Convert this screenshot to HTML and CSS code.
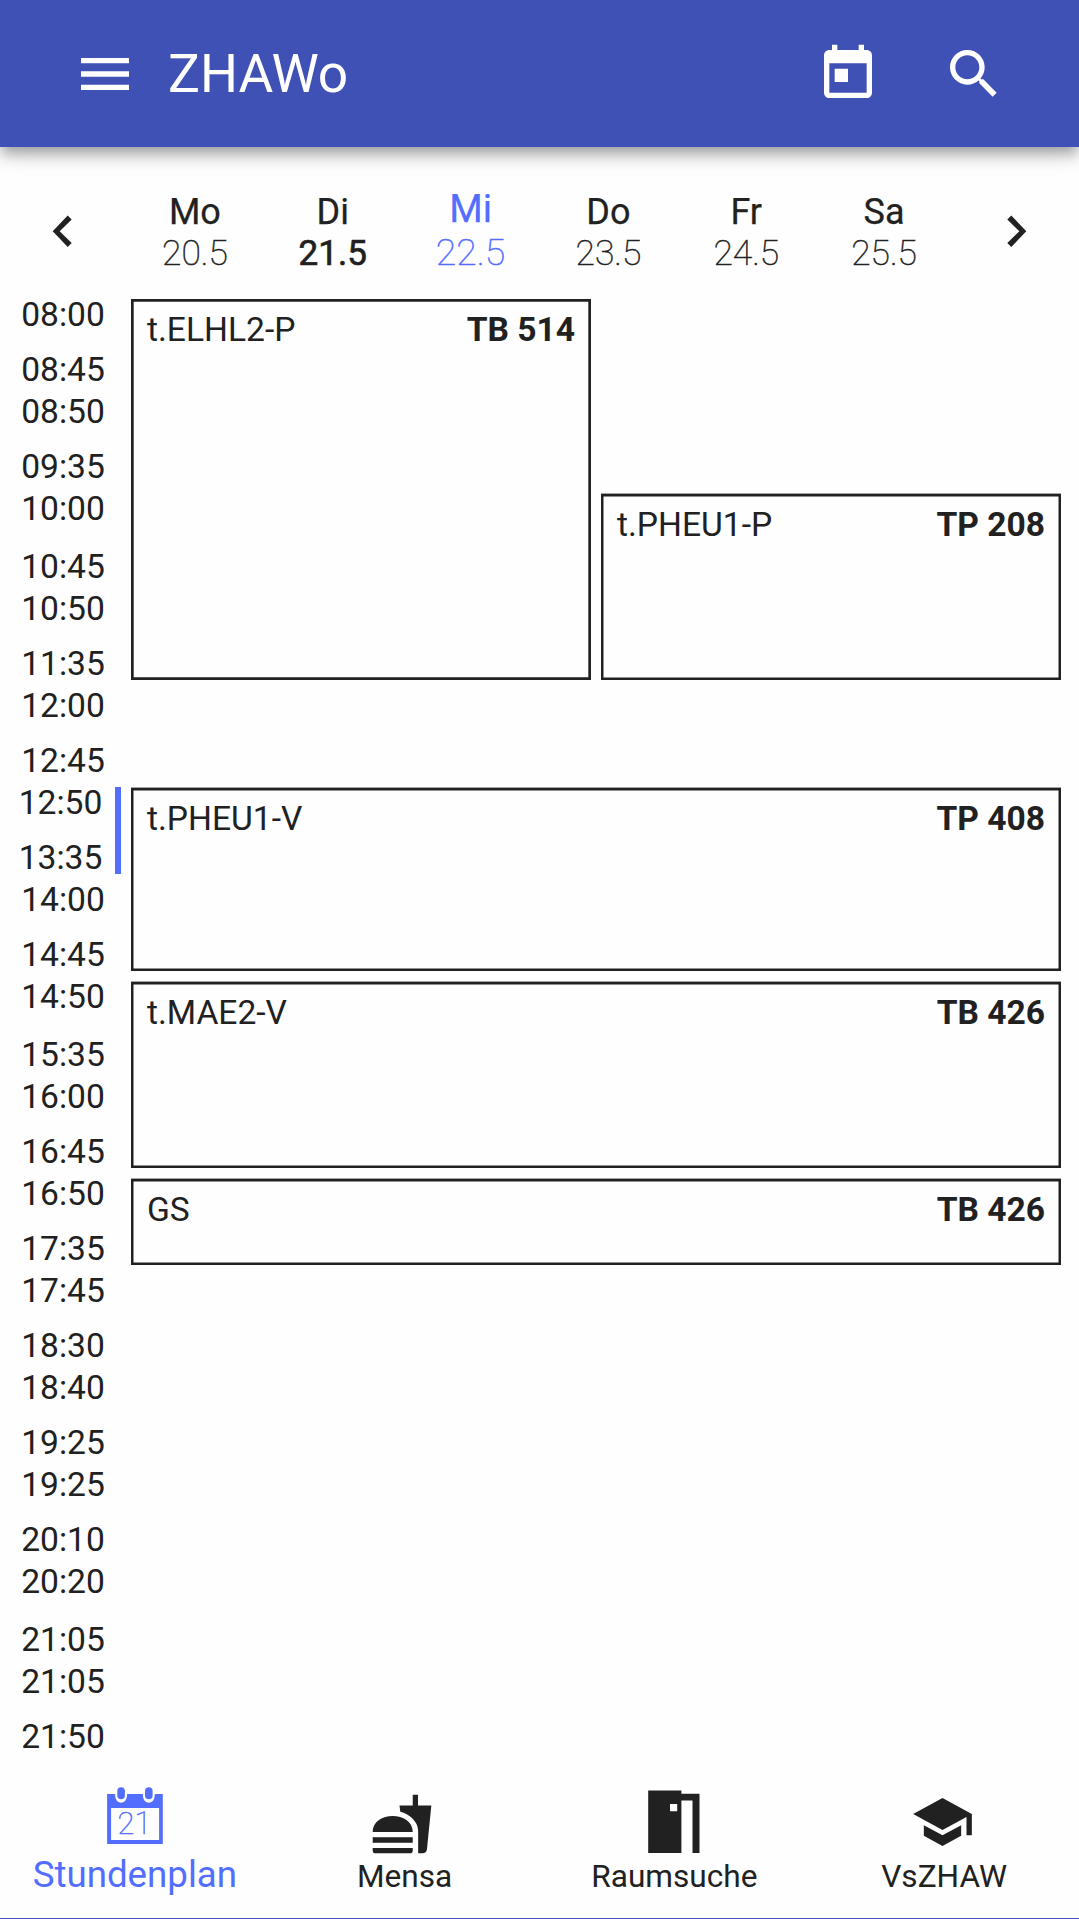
FILE: index.html
```html
<!DOCTYPE html>
<html lang="de">
<head>
<meta charset="utf-8">
<title>ZHAWo</title>
<link rel="stylesheet" href="styles.css">
</head>
<body>
<header class="topbar">
  <svg class="icon" viewBox="0 0 24 24"><path d="M3 18h18v-2H3v2zm0-5h18v-2H3v2zm0-7v2h18V6H3z"/></svg>
  <h1 class="title">ZHAWo</h1>
  <svg class="icon today" viewBox="0 0 24 24"><path d="M19 3h-1V1h-2v2H8V1H6v2H5c-1.11 0-1.99.9-1.99 2L3 19c0 1.1.89 2 2 2h14c1.1 0 2-.9 2-2V5c0-1.1-.9-2-2-2zm0 16H5V8h14v11zM7 10h5v5H7z"/></svg>
  <svg class="icon" viewBox="0 0 24 24"><path d="M15.5 14h-.79l-.28-.27C15.41 12.59 16 11.11 16 9.5 16 5.91 13.09 3 9.5 3S3 5.91 3 9.5 5.91 16 9.5 16c1.61 0 3.09-.59 4.23-1.57l.27.28v.79l5 4.99L20.49 19l-4.99-5zm-6 0C7.01 14 5 11.99 5 9.5S7.01 5 9.5 5 14 7.01 14 9.5 11.99 14 9.5 14z"/></svg>
</header>

<section class="week">
  <svg class="chevron" viewBox="0 0 126 152"><path d="M71.7 219.5l-12 11.8 12 11.8-4 3.9-15-15.7 15-15.7z" transform="translate(0 -147)"/></svg>
  <div class="day"><span class="name">Mo</span><span class="date">20.5</span></div>
  <div class="day today-date"><span class="name">Di</span><span class="date">21.5</span></div>
  <div class="day selected"><span class="name">Mi</span><span class="date">22.5</span></div>
  <div class="day"><span class="name">Do</span><span class="date">23.5</span></div>
  <div class="day"><span class="name">Fr</span><span class="date">24.5</span></div>
  <div class="day"><span class="name">Sa</span><span class="date">25.5</span></div>
  <svg class="chevron" viewBox="0 0 126 152"><path d="M54.3 72.5l12 11.8-12 11.8 4 3.9 15-15.7-15-15.7z"/></svg>
</section>

<main class="schedule">
  <div class="times">
    <div class="slot"><span>08:00</span><span>08:45</span></div>
    <div class="slot"><span>08:50</span><span>09:35</span></div>
    <div class="slot"><span>10:00</span><span>10:45</span></div>
    <div class="slot"><span>10:50</span><span>11:35</span></div>
    <div class="slot"><span>12:00</span><span>12:45</span></div>
    <div class="slot now"><span>12:50</span><span>13:35</span></div>
    <div class="slot"><span>14:00</span><span>14:45</span></div>
    <div class="slot"><span>14:50</span><span>15:35</span></div>
    <div class="slot"><span>16:00</span><span>16:45</span></div>
    <div class="slot"><span>16:50</span><span>17:35</span></div>
    <div class="slot"><span>17:45</span><span>18:30</span></div>
    <div class="slot"><span>18:40</span><span>19:25</span></div>
    <div class="slot"><span>19:25</span><span>20:10</span></div>
    <div class="slot"><span>20:20</span><span>21:05</span></div>
    <div class="slot"><span>21:05</span><span>21:50</span></div>
  </div>
  <div class="events">
    <article class="event elhl"><span>t.ELHL2-P</span><b>TB 514</b></article>
    <article class="event pheu-p"><span>t.PHEU1-P</span><b>TP 208</b></article>
    <article class="event pheu-v"><span>t.PHEU1-V</span><b>TP 408</b></article>
    <article class="event mae"><span>t.MAE2-V</span><b>TB 426</b></article>
    <article class="event gs"><span>GS</span><b>TB 426</b></article>
  </div>
</main>

<nav class="tabs">
  <a class="tab active">
    <svg class="tab-icon" viewBox="0 0 64 64"><path fill-rule="evenodd" d="M4.1 9h8c0 5.500 2.500 8.700 6 8.700s6-3.200 6-8.700h15.700c0 5.500 2.500 8.700 6 8.700s6-3.200 6-8.700h8v50H4.100zM8.100 23v32h48V23z"/><rect x="14.300" y="2.300" width="7.600" height="12" rx="3.800"/><rect x="42" y="2.300" width="7.600" height="12" rx="3.800"/><text class="cal-day" x="31.500" y="48.800" text-anchor="middle">21</text></svg>
    <span>Stundenplan</span>
  </a>
  <a class="tab">
    <svg class="tab-icon mensa" viewBox="0 0 24 24"><path d="M18.06 22.99h1.66c.84 0 1.53-.64 1.63-1.46L23 5.05h-5V1h-1.97v4.05h-4.97l.3 2.34c1.71.47 3.31 1.32 4.27 2.26 1.44 1.42 2.43 2.89 2.43 5.29v8.05zM1 21.99V21h15.03v.99c0 .55-.45 1-1.01 1H2.01c-.56 0-1.01-.45-1.01-1zm15.03-7c0-8-15.03-8-15.03 0h15.03zM1.02 17h15v2h-15v-2z"/></svg>
    <span>Mensa</span>
  </a>
  <a class="tab">
    <svg class="tab-icon" viewBox="0 0 64 64"><path fill-rule="evenodd" d="M6.2 4.400h33.200v3.400h18.100v59.100h-7V14.600H39.400v52.300H6.200zM28 18v7.200h7.200V18z"/></svg>
    <span>Raumsuche</span>
  </a>
  <a class="tab">
    <svg class="tab-icon hat" viewBox="0 0 24 24"><path d="M5 13.18v4L12 21l7-3.82v-4L12 17l-7-3.82zM12 3L1 9l11 6 9-4.910V17h2V9L12 3z"/></svg>
    <span>VsZHAW</span>
  </a>
</nav>
</body>
</html>
```
FILE: styles.css
```css
* { box-sizing: border-box; }

body {
  margin: 0;
  height: 1919px;
  display: flex;
  flex-direction: column;
  overflow: hidden;
  background: #fefefe;
  border-bottom: 1px solid #3f51b5;
  color: #212121;
  font-family: Roboto, sans-serif;
  font-size: 33.6px;
}

svg { display: block; fill: currentColor; }

.topbar {
  flex: none;
  height: 147px;
  padding: 0 73px;
  display: flex;
  align-items: center;
  background: #3f51b5;
  color: #fff;
  box-shadow: 0 6px 11px -3px rgba(0, 0, 0, .24), 0 11px 13px 0 rgba(0, 0, 0, .14), 0 3px 27px 0 rgba(0, 0, 0, .12);
}
.icon { width: 64px; height: 64px; }
.title { margin: 0 auto 0 31px; font-size: 53.3px; font-weight: 400; }
.today { margin-right: 62px; }

.week {
  flex: none;
  height: 152px;
  display: grid;
  grid-template-columns: 126px repeat(6, 1fr) 126px;
}
.chevron { width: 126px; height: 152px; }
.day {
  padding-top: 44px;
  display: flex;
  flex-direction: column;
  align-items: center;
}
.name {
  font-size: 36px;
  line-height: 42px;
  -webkit-text-stroke: .25px currentColor;
}
.date { font-size: 35.4px; line-height: 41px; font-weight: 250; -webkit-text-stroke: .5px currentColor; }
.today-date .date { font-size: 35px; font-weight: 400; -webkit-text-stroke: .7px currentColor; }
.selected { padding-top: 41px; color: #536dfe; }
.selected .name { font-size: 38.4px; }
.selected .date { font-size: 37.4px; line-height: 45px; }

.schedule {
  flex: none;
  display: grid;
  grid-template-columns: 121px 930px;
  column-gap: 10px;
}
.times, .events {
  display: grid;
  grid-template-rows: 87px 87px 90px repeat(4, 87px) 90px repeat(5, 87px) 90px 87px;
  row-gap: 10px;
}
.slot {
  padding-right: 5px;
  display: flex;
  flex-direction: column;
  justify-content: space-between;
  text-align: center;
  border-left: 10px solid transparent;
  line-height: 32px;
}
.now { padding-right: 0; border-left-width: 6px; border-right: 6px solid #536dfe; }

.events { grid-template-columns: 1fr 1fr; column-gap: 10px; }
.event {
  margin-top: 1px;
  padding: 11px 14px;
  display: flex;
  justify-content: space-between;
  border: 2px solid #212121;
  box-shadow: inset 0 0 0 .5px #212121, 0 -1px 0 rgba(33, 33, 33, .4);
  line-height: 36px;
}
.event b { font-weight: 700; }
.elhl { grid-area: 1 / 1 / 5 / 2; margin-top: 0; box-shadow: inset 0 0 0 .7px #212121; }
.pheu-p { grid-area: 3 / 2 / 5 / 3; }
.pheu-v { grid-area: 6 / 1 / 8 / 3; }
.mae { grid-area: 8 / 1 / 10 / 3; }
.gs { grid-area: 10 / 1 / 11 / 3; }

.tabs {
  flex: 1;
  padding-top: 32px;
  display: grid;
  grid-template-columns: repeat(4, 1fr);
}
.tab {
  padding-top: 1px;
  display: flex;
  flex-direction: column;
  align-items: center;
  font-size: 31.6px;
  line-height: 40px;
}
.tab-icon { width: 64px; height: 64px; margin-bottom: 7px; overflow: visible; }
.mensa { transform: translate(-3px, 6px); }
.hat { transform: translate(-1.5px, 4px); }
.active { padding-top: 0; color: #536dfe; font-size: 36.7px; line-height: 37px; }
.cal-day { font-size: 31px; font-weight: 250; stroke: currentColor; stroke-width: .5px; }
```
